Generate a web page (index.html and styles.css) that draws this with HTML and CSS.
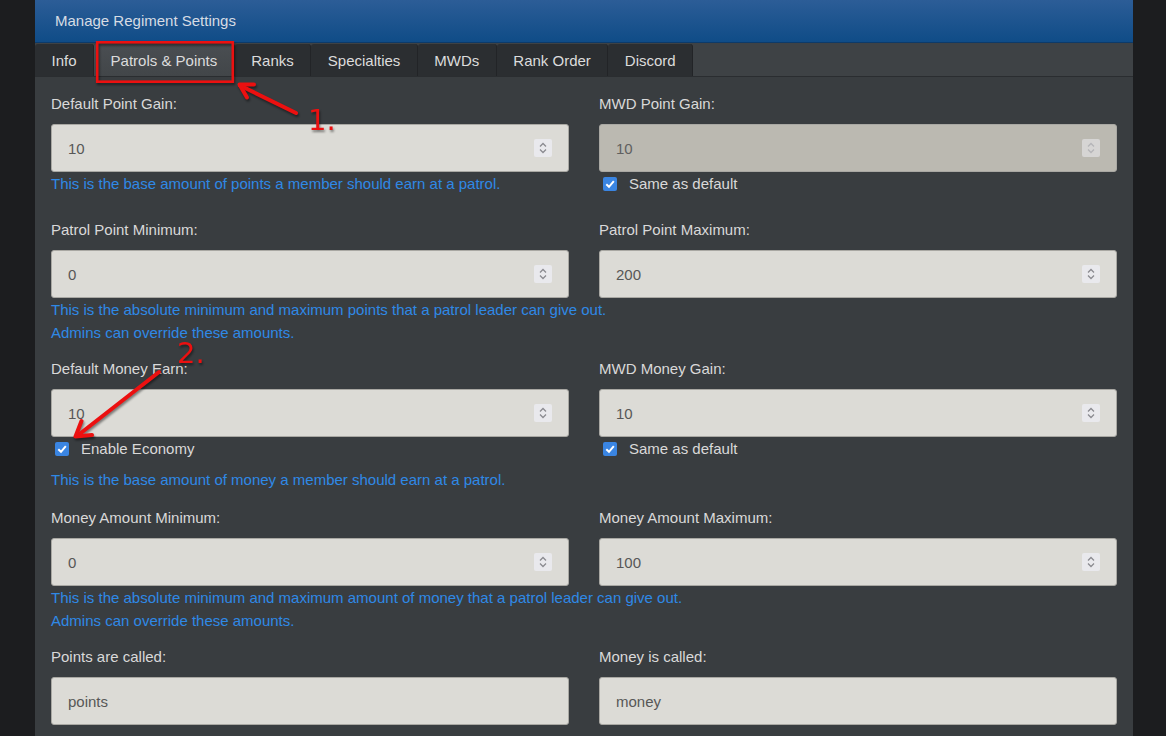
FILE: index.html
```html
<!DOCTYPE html>
<html lang="en">
<head>
<meta charset="utf-8">
<title>Manage Regiment Settings</title>
<link rel="stylesheet" href="styles.css">
</head>
<body>
<div class="panel">
  <div class="panel-head">Manage Regiment Settings</div>
  <div class="tabs">
    <div class="tab">Info</div>
    <div class="tab active">Patrols &amp; Points</div>
    <div class="tab">Ranks</div>
    <div class="tab">Specialties</div>
    <div class="tab">MWDs</div>
    <div class="tab">Rank Order</div>
    <div class="tab">Discord</div>
  </div>
  <div class="content">
    <section class="row">
      <div class="grid2">
        <div class="col">
          <div class="label">Default Point Gain:</div>
          <div class="field"><span>10</span><span class="spin"><svg viewBox="0 0 18 18" width="18" height="18"><path d="M6 7.5 L9 4.5 L12 7.5 M6 10.5 L9 13.5 L12 10.5" fill="none" stroke="#8b8b90" stroke-width="1.3"/></svg></span></div>
          <div class="help">This is the base amount of points a member should earn at a patrol.</div>
        </div>
        <div class="col">
          <div class="label">MWD Point Gain:</div>
          <div class="field disabled"><span>10</span><span class="spin"><svg viewBox="0 0 18 18" width="18" height="18"><path d="M6 7.5 L9 4.5 L12 7.5 M6 10.5 L9 13.5 L12 10.5" fill="none" stroke="#b5b5b8" stroke-width="1.3"/></svg></span></div>
          <div class="check"><span class="box"><svg viewBox="0 0 14 14" width="14" height="14"><path d="M3.3 7.2 L6 9.8 L10.8 4.2" fill="none" stroke="#fff" stroke-width="2"/></svg></span>Same as default</div>
        </div>
      </div>
    </section>

    <section class="row">
      <div class="grid2">
        <div class="col">
          <div class="label">Patrol Point Minimum:</div>
          <div class="field"><span>0</span><span class="spin"><svg viewBox="0 0 18 18" width="18" height="18"><path d="M6 7.5 L9 4.5 L12 7.5 M6 10.5 L9 13.5 L12 10.5" fill="none" stroke="#8b8b90" stroke-width="1.3"/></svg></span></div>
        </div>
        <div class="col">
          <div class="label">Patrol Point Maximum:</div>
          <div class="field"><span>200</span><span class="spin"><svg viewBox="0 0 18 18" width="18" height="18"><path d="M6 7.5 L9 4.5 L12 7.5 M6 10.5 L9 13.5 L12 10.5" fill="none" stroke="#8b8b90" stroke-width="1.3"/></svg></span></div>
        </div>
      </div>
      <div class="help">This is the absolute minimum and maximum points that a patrol leader can give out.<br>Admins can override these amounts.</div>
    </section>

    <section class="row">
      <div class="grid2">
        <div class="col">
          <div class="label">Default Money Earn:</div>
          <div class="field"><span>10</span><span class="spin"><svg viewBox="0 0 18 18" width="18" height="18"><path d="M6 7.5 L9 4.5 L12 7.5 M6 10.5 L9 13.5 L12 10.5" fill="none" stroke="#8b8b90" stroke-width="1.3"/></svg></span></div>
          <div class="check"><span class="box"><svg viewBox="0 0 14 14" width="14" height="14"><path d="M3.3 7.2 L6 9.8 L10.8 4.2" fill="none" stroke="#fff" stroke-width="2"/></svg></span>Enable Economy</div>
        </div>
        <div class="col">
          <div class="label">MWD Money Gain:</div>
          <div class="field"><span>10</span><span class="spin"><svg viewBox="0 0 18 18" width="18" height="18"><path d="M6 7.5 L9 4.5 L12 7.5 M6 10.5 L9 13.5 L12 10.5" fill="none" stroke="#8b8b90" stroke-width="1.3"/></svg></span></div>
          <div class="check"><span class="box"><svg viewBox="0 0 14 14" width="14" height="14"><path d="M3.3 7.2 L6 9.8 L10.8 4.2" fill="none" stroke="#fff" stroke-width="2"/></svg></span>Same as default</div>
        </div>
      </div>
      <div class="help lifted">This is the base amount of money a member should earn at a patrol.</div>
    </section>

    <section class="row">
      <div class="grid2">
        <div class="col">
          <div class="label">Money Amount Minimum:</div>
          <div class="field"><span>0</span><span class="spin"><svg viewBox="0 0 18 18" width="18" height="18"><path d="M6 7.5 L9 4.5 L12 7.5 M6 10.5 L9 13.5 L12 10.5" fill="none" stroke="#8b8b90" stroke-width="1.3"/></svg></span></div>
        </div>
        <div class="col">
          <div class="label">Money Amount Maximum:</div>
          <div class="field"><span>100</span><span class="spin"><svg viewBox="0 0 18 18" width="18" height="18"><path d="M6 7.5 L9 4.5 L12 7.5 M6 10.5 L9 13.5 L12 10.5" fill="none" stroke="#8b8b90" stroke-width="1.3"/></svg></span></div>
        </div>
      </div>
      <div class="help">This is the absolute minimum and maximum amount of money that a patrol leader can give out.<br>Admins can override these amounts.</div>
    </section>

    <section class="row">
      <div class="grid2">
        <div class="col">
          <div class="label">Points are called:</div>
          <div class="field"><span>points</span></div>
        </div>
        <div class="col">
          <div class="label">Money is called:</div>
          <div class="field"><span>money</span></div>
        </div>
      </div>
    </section>
  </div>
</div>

<svg class="annot" viewBox="0 0 1166 736" width="1166" height="736">
  <rect x="97.2" y="42.3" width="135.6" height="39.4" fill="none" stroke="#ec1010" stroke-width="2.6"/>
  <g fill="none" stroke="#ec1010" stroke-width="4" stroke-linecap="round" stroke-linejoin="round">
    <path d="M296 113 L240 85.5"/>
    <path d="M254 84.5 L239.5 84.5 L247 97.5"/>
    <path d="M159 372 L77 436"/>
    <path d="M81.5 421 L75.5 436.5 L92 435"/>
  </g>
  <text x="308" y="130" class="num">1.</text>
  <text x="177" y="363" class="num">2.</text>
</svg>
</body>
</html>
```

FILE: styles.css
```css
html, body {
  margin: 0;
  padding: 0;
}
body {
  background: #1c1d1f;
  font-family: "Liberation Sans", Arial, sans-serif;
  font-size: 15px;
  width: 1166px;
  height: 736px;
  overflow: hidden;
}
.panel {
  margin-left: 35px;
  width: 1098px;
  min-height: 736px;
  background: #393d40;
}
.panel-head {
  height: 43px;
  box-sizing: border-box;
  padding-left: 20px;
  line-height: 41px;
  color: #d6dce4;
  font-size: 15px;
  background: linear-gradient(#2c5d97, #0f4c87);
  border-bottom: 1px solid #0d3a68;
}
.tabs {
  display: flex;
  height: 34px;
  box-sizing: border-box;
  padding-top: 1px;
  background: #3e4245;
  border-bottom: 1px solid #2a2d30;
}
.tab {
  height: 32px;
  box-sizing: border-box;
  padding: 1px 16.5px 0;
  line-height: 32px;
  overflow: hidden;
  color: #dcdcdc;
  background: #2b2e31;
  border-right: 1px solid #222427;
  border-radius: 3px 3px 0 0;
}
.tab.active {
  background: linear-gradient(#4a4e52, #424649);
}
.content {
  padding: 17px 16px 0;
}
.row {
  margin-bottom: 15px;
}
.grid2 {
  display: grid;
  grid-template-columns: 1fr 1fr;
  column-gap: 30px;
}
.col {
  display: flex;
  flex-direction: column;
}
.label {
  color: #d9d9d9;
  line-height: 20px;
  margin-bottom: 10px;
}
.field {
  height: 48px;
  box-sizing: border-box;
  border: 1px solid #a9a8a3;
  border-radius: 3px;
  background: #dcdbd6;
  color: #575757;
  display: flex;
  align-items: center;
  justify-content: space-between;
  padding: 0 16px 0 16px;
}
.field.disabled {
  background: #bbb9b1;
  color: #606060;
}
.spin {
  display: flex;
  width: 18px;
  height: 18px;
  background: #e9e9ed;
  border-radius: 2px;
}
.field.disabled .spin {
  background: #d6d5d4;
}
.help {
  color: #2f89e6;
  line-height: 23px;
}
.help.lifted {
  margin-top: -2px;
  padding-bottom: 2px;
}
.check {
  display: flex;
  align-items: center;
  height: 23px;
  padding-left: 4px;
  margin-bottom: 10px;
  color: #d9d9d9;
}
.box {
  display: flex;
  width: 14px;
  height: 14px;
  border-radius: 2px;
  background: #3a85e2;
  margin-right: 12px;
}
.annot {
  position: absolute;
  top: 0;
  left: 0;
  pointer-events: none;
  filter: drop-shadow(1px 2px 1px rgba(0, 0, 0, 0.45));
}
.num {
  fill: #ec1010;
  font-family: "DejaVu Sans", sans-serif;
  font-size: 29px;
}
```
